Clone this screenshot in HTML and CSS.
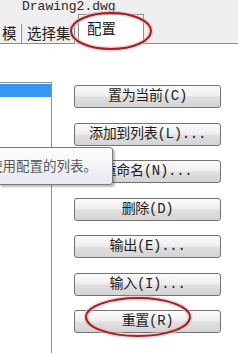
FILE: index.html
```html
<!DOCTYPE html>
<html lang="zh">
<head>
<meta charset="utf-8">
<link rel="stylesheet" href="styles.css">
</head>
<body>
<div class="page">
  <div class="title">Drawing2.dwg</div>
  <div class="tabs">
    <div class="tab first">模</div>
    <div class="tab second">选择集</div>
    <div class="tab active">配置</div>
    <div class="tab-rest"></div>
  </div>
  <div class="body">
    <div class="list">
      <div class="sel"></div>
    </div>
    <div class="buttons">
      <div class="btn">置为当前(C)</div>
      <div class="btn">添加到列表(L)...</div>
      <div class="btn">重命名(N)...</div>
      <div class="btn">删除(D)</div>
      <div class="btn">输出(E)...</div>
      <div class="btn">输入(I)...</div>
      <div class="btn">重置(R)</div>
    </div>
  </div>
  <div class="tooltip"><span class="tip-text">使用配置的列表。</span></div>
  <svg class="marks" width="238" height="353" viewBox="0 0 238 353">
    <ellipse cx="111" cy="31" rx="40" ry="18" fill="none" stroke="#f0b8b8" stroke-width="5" opacity="0.6"/>
    <ellipse cx="111" cy="31" rx="40" ry="18" fill="none" stroke="#9a2428" stroke-width="2"/>
    <ellipse cx="138" cy="317" rx="52" ry="19" fill="none" stroke="#f0b8b8" stroke-width="5" opacity="0.6"/>
    <ellipse cx="138" cy="317" rx="52" ry="19" fill="none" stroke="#9a2428" stroke-width="2"/>
  </svg>
</div>
</body>
</html>
```
FILE: styles.css
```css
html, body {
  margin: 0;
  padding: 0;
  background: #ffffff;
}
.page {
  position: relative;
  width: 238px;
  height: 353px;
  overflow: hidden;
  background: #ffffff;
}
.title {
  height: 14px;
  padding-left: 22px;
  background: #efefef;
  font-family: "Liberation Mono", monospace;
  font-size: 13px;
  line-height: 13px;
  color: #2a2a2a;
}
.tabs {
  display: flex;
  height: 30px;
  background: #efefef;
  align-items: flex-end;
}
.tab {
  box-sizing: border-box;
  height: 20px;
  font-family: "Noto Sans CJK SC", sans-serif;
  font-size: 14.5px;
  line-height: 18px;
  color: #1a1a1a;
  border-right: 1px solid #8c8c8c;
  border-bottom: 1px solid #8c8c8c;
  box-shadow: inset -1px 0 0 #ffffff;
  white-space: nowrap;
}
.tab.first {
  width: 22px;
  padding-left: 2px;
}
.tab.second {
  width: 53px;
  padding-left: 5px;
}
.tab.active {
  height: 30px;
  width: 66px;
  padding-left: 8px;
  line-height: 26px;
  margin-left: 3px;
  background: #ffffff;
  border-left: 1px solid #8c8c8c;
  border-top: 1px solid #8c8c8c;
  border-bottom: none;
  box-shadow: none;
}
.tab-rest {
  flex: 1;
  box-sizing: border-box;
  height: 20px;
  border-bottom: 1px solid #8c8c8c;
}
.body {
  display: flex;
  height: 309px;
}
.list {
  width: 51px;
  margin-top: 38px;
  border-top: 1px solid #8a8f98;
  border-right: 1px solid #8a8f98;
  padding-top: 1px;
}
.sel {
  height: 13px;
  background: #3a96f5;
}
.buttons {
  display: flex;
  flex-direction: column;
  gap: 14.5px;
  margin-left: 22px;
  margin-top: 41px;
  width: 147px;
}
.btn {
  height: 21px;
  border: 1px solid #737373;
  border-radius: 3px;
  background: linear-gradient(#fbfbfb, #eeeeee 48%, #e0e0e0 52%, #d4d4d4);
  font-family: "Liberation Mono", "Noto Sans CJK SC", monospace;
  font-size: 14px;
  line-height: 21px;
  text-align: center;
  color: #1c1c1c;
  letter-spacing: -0.3px;
  white-space: nowrap;
}
.tooltip {
  position: absolute;
  left: -1px;
  top: 147px;
  width: 112px;
  height: 36px;
  border: 1px solid #7a7a7a;
  border-radius: 0 3px 3px 0;
  background: linear-gradient(#ffffff, #e6e7f0);
  box-shadow: 2px 2px 2px rgba(0, 0, 0, 0.25);
  overflow: hidden;
}
.tip-text {
  position: absolute;
  left: -11px;
  top: 8px;
  font-family: "Noto Sans CJK SC", sans-serif;
  font-size: 13.5px;
  line-height: 18px;
  white-space: nowrap;
  color: #575757;
}
.marks {
  position: absolute;
  left: 0;
  top: 0;
  pointer-events: none;
}
```
